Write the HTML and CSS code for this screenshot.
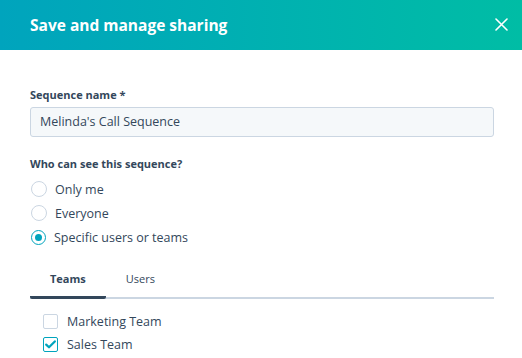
FILE: index.html
```html
<!DOCTYPE html>
<html>
<head>
<meta charset="utf-8">
<link rel="stylesheet" href="styles.css">
</head>
<body>
<div class="modal">
  <header class="modal-header">
    <h1 class="modal-title">Save and manage sharing</h1>
    <button class="close" aria-label="Close">
      <svg width="13" height="13" viewBox="0 0 13 13"><path d="M1 1 L12 12 M12 1 L1 12" stroke="#fff" stroke-width="1.6" stroke-linecap="round"/></svg>
    </button>
  </header>
  <div class="modal-body">
    <label class="field-label">Sequence name *</label>
    <div class="input">Melinda's Call Sequence</div>
    <div class="field-label who">Who can see this sequence?</div>
    <div class="radios">
      <div class="radio-row"><span class="radio"></span><span>Only me</span></div>
      <div class="radio-row"><span class="radio"></span><span>Everyone</span></div>
      <div class="radio-row"><span class="radio checked"></span><span>Specific users or teams</span></div>
    </div>
    <div class="tabs">
      <div class="tab active">Teams</div>
      <div class="tab">Users</div>
    </div>
    <div class="checks">
      <div class="check-row"><span class="checkbox"></span><span>Marketing Team</span></div>
      <div class="check-row"><span class="checkbox checked"><svg width="11" height="9" viewBox="0 0 11 9"><path d="M1.2 4.6 L4 7.3 L9.8 1.4" fill="none" stroke="#00a4bd" stroke-width="2.2" stroke-linecap="round" stroke-linejoin="round"/></svg></span><span>Sales Team</span></div>
    </div>
  </div>
</div>
</body>
</html>
```
FILE: styles.css
```css
html, body {
  margin: 0;
  padding: 0;
  background: #fff;
}
body {
  font-family: "Open Sans", "Noto Sans", sans-serif;
  color: #33475b;
  width: 522px;
  height: 358px;
  overflow: hidden;
}
.modal-header {
  height: 50px;
  background: linear-gradient(90deg, #00a4bd 0%, #00bda5 100%);
  display: flex;
  align-items: center;
  justify-content: space-between;
  padding: 0 14px 0 30px;
}
.modal-title {
  margin: 0;
  color: #fff;
  font-size: 15.5px;
  font-weight: 700;
}
.close {
  background: none;
  border: 0;
  padding: 0;
  width: 13px;
  height: 13px;
  display: flex;
  margin-bottom: 2px;
}
.modal-body {
  padding: 37px 28px 0 30px;
  display: flex;
  flex-direction: column;
}
.field-label {
  display: block;
  font-size: 11px;
  font-weight: 700;
  line-height: 16px;
  color: #33475b;
}
.input {
  margin-top: 4px;
  height: 28px;
  border: 1px solid #cbd6e2;
  border-radius: 3px;
  background: #f5f8fa;
  font-size: 12.5px;
  line-height: 28px;
  padding: 0 9px;
}
.who {
  margin-top: 19px;
}
.radios {
  margin-top: 5px;
  display: flex;
  flex-direction: column;
}
.radio-row {
  display: flex;
  align-items: center;
  gap: 8px;
  height: 24px;
  font-size: 12.5px;
}
.radio {
  width: 14px;
  height: 14px;
  border: 1px solid #cbd6e2;
  border-radius: 50%;
  background: #fff;
  margin-left: 1px;
  box-sizing: content-box;
  display: flex;
  align-items: center;
  justify-content: center;
}
.radio.checked {
  border: 1.5px solid #00a4bd;
  width: 13px;
  height: 13px;
}
.radio.checked::after {
  content: "";
  width: 7px;
  height: 7px;
  border-radius: 50%;
  background: #00a4bd;
}
.tabs {
  margin-top: 14px;
  display: flex;
  border-bottom: 2px solid #cbd6e2;
}
.tab {
  font-size: 11px;
  line-height: 16px;
  padding: 8px 20px 9px 20px;
  margin-bottom: -2px;
  border-bottom: 3px solid transparent;
  color: #33475b;
}
.tab.active {
  font-weight: 700;
  border-bottom-color: #33475b;
  border-radius: 2px;
}
.checks {
  margin-top: 15px;
  padding-left: 13px;
  display: flex;
  flex-direction: column;
  gap: 8px;
}
.check-row {
  display: flex;
  align-items: center;
  gap: 9px;
  font-size: 12.5px;
  height: 15px;
}
.checkbox {
  width: 13px;
  height: 13px;
  border: 1px solid #cbd6e2;
  border-radius: 2px;
  background: #fff;
  display: flex;
  align-items: center;
  justify-content: center;
}
.checkbox.checked {
  border-color: #00a4bd;
}
```
